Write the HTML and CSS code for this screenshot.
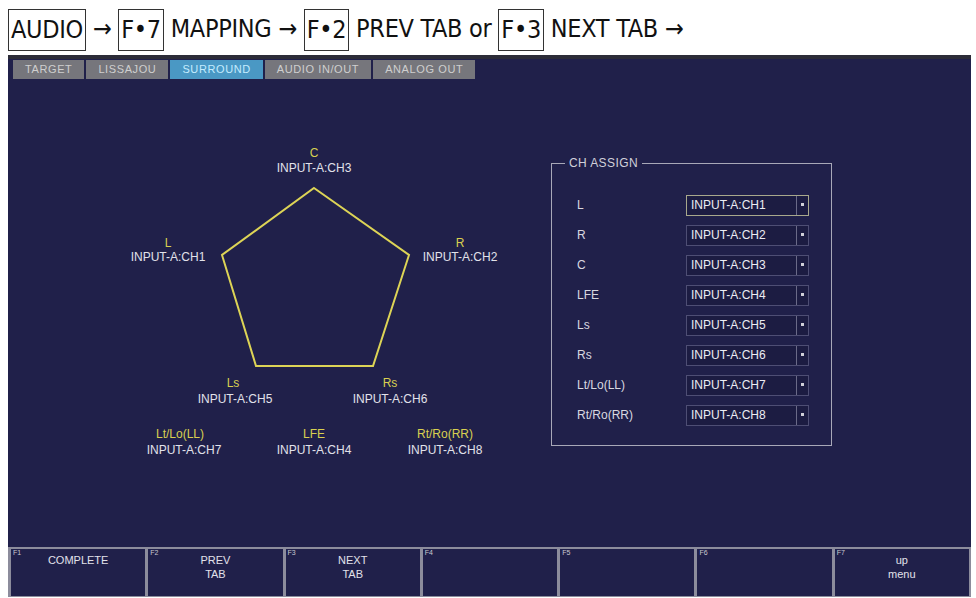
FILE: index.html
```html
<!DOCTYPE html>
<html>
<head>
  <meta charset="UTF-8">
  <title>SURROUND MAPPING</title>
  <link rel="stylesheet" href="styles.css">
</head>
<body>
  <!-- menu path -->
  <div class="path">
    <span class="key">AUDIO</span> → <span class="key">F•7</span> MAPPING → <span class="key">F•2</span> PREV TAB or <span class="key">F•3</span> NEXT TAB →
  </div>

  <div class="screen">
    <div class="tabs">
      <div class="tab">TARGET</div>
      <div class="tab">LISSAJOU</div>
      <div class="tab active">SURROUND</div>
      <div class="tab">AUDIO IN/OUT</div>
      <div class="tab">ANALOG OUT</div>
    </div>

    <div class="main">
      <!-- speaker layout, coordinates are screen pixels -->
      <svg class="diagram" viewBox="8 80 543 467" width="543" height="467">
        <polygon class="pent" points="314,188 409,255 373,366 256,366 222,255" />

        <text class="ch" x="314" y="157">C</text>
        <text class="src" x="314" y="172">INPUT-A:CH3</text>

        <text class="ch" x="168" y="247">L</text>
        <text class="src" x="168" y="261">INPUT-A:CH1</text>

        <text class="ch" x="460" y="247">R</text>
        <text class="src" x="460" y="261">INPUT-A:CH2</text>

        <text class="ch" x="233" y="387">Ls</text>
        <text class="src" x="235" y="403">INPUT-A:CH5</text>

        <text class="ch" x="390" y="387">Rs</text>
        <text class="src" x="390" y="403">INPUT-A:CH6</text>

        <text class="ch" x="180" y="438">Lt/Lo(LL)</text>
        <text class="src" x="184" y="454">INPUT-A:CH7</text>

        <text class="ch" x="314" y="438">LFE</text>
        <text class="src" x="314" y="454">INPUT-A:CH4</text>

        <text class="ch" x="445" y="438">Rt/Ro(RR)</text>
        <text class="src" x="445" y="454">INPUT-A:CH8</text>
      </svg>

      <fieldset class="assign">
        <legend>CH ASSIGN</legend>
        <div class="row"><span class="name">L</span><div class="sel focus"><span>INPUT-A:CH1</span><i></i></div></div>
        <div class="row"><span class="name">R</span><div class="sel"><span>INPUT-A:CH2</span><i></i></div></div>
        <div class="row"><span class="name">C</span><div class="sel"><span>INPUT-A:CH3</span><i></i></div></div>
        <div class="row"><span class="name">LFE</span><div class="sel"><span>INPUT-A:CH4</span><i></i></div></div>
        <div class="row"><span class="name">Ls</span><div class="sel"><span>INPUT-A:CH5</span><i></i></div></div>
        <div class="row"><span class="name">Rs</span><div class="sel"><span>INPUT-A:CH6</span><i></i></div></div>
        <div class="row"><span class="name">Lt/Lo(LL)</span><div class="sel"><span>INPUT-A:CH7</span><i></i></div></div>
        <div class="row"><span class="name">Rt/Ro(RR)</span><div class="sel"><span>INPUT-A:CH8</span><i></i></div></div>
      </fieldset>
    </div>

    <!-- function keys -->
    <div class="fkeys">
      <div class="fkey"><small>F1</small>COMPLETE</div>
      <div class="fkey"><small>F2</small>PREV<br>TAB</div>
      <div class="fkey"><small>F3</small>NEXT<br>TAB</div>
      <div class="fkey"><small>F4</small></div>
      <div class="fkey"><small>F5</small></div>
      <div class="fkey"><small>F6</small></div>
      <div class="fkey"><small>F7</small>up<br>menu</div>
    </div>
  </div>
</body>
</html>
```

FILE: styles.css
```css
/* page */
body {
  margin: 0;
  background-color: #fff;
  font-family: "Liberation Sans", Arial, sans-serif;
}

/* menu path above the screen */
.path {
  height: 55px;
  line-height: 58px;
  padding-left: 8px;
  font-family: "Liberation Sans Narrow", "DejaVu Sans Condensed", "Liberation Sans", sans-serif;
  font-stretch: condensed;
  font-size: 25px;
  letter-spacing: -0.3px;
  color: #111;
  white-space: nowrap;
}

.path .key {
  display: inline-block;
  line-height: 40px;
  padding: 0 2px;
  border: 1px solid #333;
  vertical-align: middle;
}

/* the instrument screen */
.screen {
  margin-left: 8px;
  width: 963px;
  height: 542px;
  display: flex;
  flex-direction: column;
  background-color: #20204a;
  color: #e2e2ea;
  font-size: 12px;
}

.tabs {
  height: 25px;
  box-sizing: border-box;
  padding: 5px 0 0 5px;
  display: flex;
  gap: 2px;
  background: linear-gradient(#2c2c38 0, #2c2c38 4px, #20204a 4px);
}

.tab {
  height: 19px;
  line-height: 19px;
  padding: 0 12px;
  background-color: #76767c;
  color: #cfcfcf;
  font-size: 11px;
  letter-spacing: 0.6px;
}

.tab.active {
  background-color: #4a98c4;
  color: #c4ecff;
}

.main {
  flex: 1;
  display: flex;
  align-items: flex-start;
}

.diagram {
  display: block;
  flex: none;
}

.pent {
  fill: none;
  stroke: #ddd456;
  stroke-width: 2;
}

.diagram text {
  font-family: "Liberation Sans", Arial, sans-serif;
  font-size: 12px;
  text-anchor: middle;
}

.diagram .ch {
  fill: #d8d050;
}

.diagram .src {
  fill: #e2e2ea;
}

/* CH ASSIGN box */
.assign {
  margin: 76px 0 0 0;
  width: 281px;
  height: 290px;
  box-sizing: border-box;
  padding: 20px 0 0 25px;
  border: 1px solid #a8a8b8;
}

.assign legend {
  margin-left: -12px;
  padding: 0 4px;
  line-height: 14px;
  font-size: 12px;
  letter-spacing: 0.4px;
  color: #d0d0da;
}

.row {
  height: 30px;
  display: flex;
  align-items: center;
}

.row .name {
  width: 109px;
  font-size: 12px;
  color: #d8d8e0;
}

.sel {
  width: 123px;
  height: 21px;
  box-sizing: border-box;
  display: flex;
  align-items: center;
  border: 1px solid #4e4e74;
  background-color: #1c1c42;
}

.sel span {
  flex: 1;
  padding-left: 4px;
  color: #ececf2;
}

.sel i {
  width: 11px;
  height: 19px;
  border-left: 1px solid #6a6a88;
  position: relative;
}

.sel i::after {
  content: "";
  position: absolute;
  left: 4px;
  top: 7px;
  width: 3px;
  height: 3px;
  background-color: #d0d0d8;
}

.sel.focus {
  border-color: #a8a88c;
}

/* function keys */
.fkeys {
  height: 50px;
  display: flex;
  border-top: 2px solid #8c8c9c;
  border-bottom: 1px solid #8c8c9c;
  box-sizing: border-box;
}

.fkey {
  flex: 1;
  position: relative;
  padding-top: 4px;
  border-left: 3px solid #8c8c9c;
  text-align: center;
  font-size: 11px;
  line-height: 14px;
  color: #e2e2ea;
}

.fkey:last-child {
  border-right: 2px solid #8c8c9c;
}

.fkey small {
  position: absolute;
  left: 2px;
  top: 0;
  font-size: 7px;
  line-height: 8px;
  color: #c8c8d0;
}
```
